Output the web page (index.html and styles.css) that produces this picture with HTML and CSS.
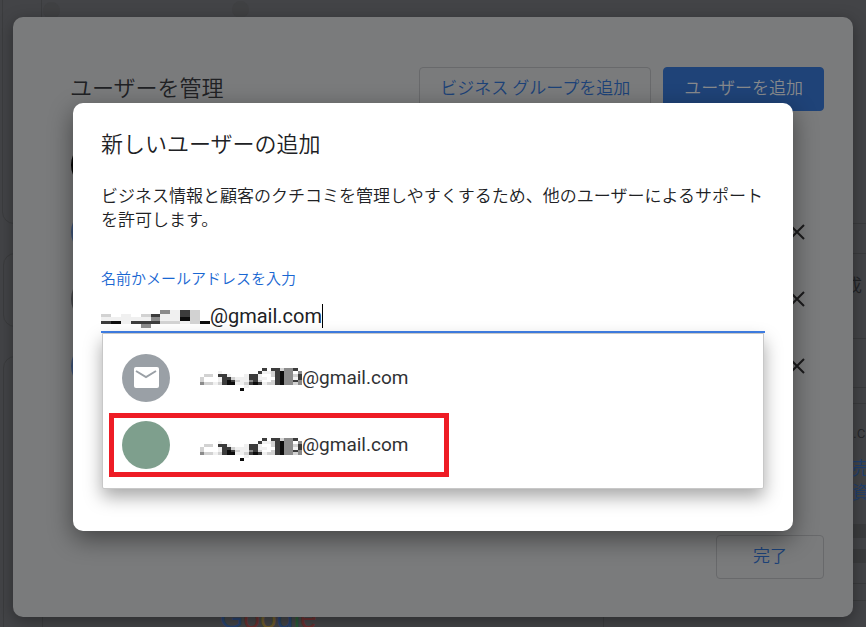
FILE: index.html
```html
<!DOCTYPE html>
<html lang="ja">
<head>
<meta charset="utf-8">
<title>ユーザーを管理</title>
<link rel="stylesheet" href="styles.css">
</head>
<body>
<div class="page" aria-hidden="true">
  <span class="card card-a"></span>
  <span class="card card-b"></span>
  <span class="card card-c"></span>
  <span class="card card-d"></span>
  <span class="rule rule-a"></span>
  <span class="rule rule-b"></span>
  <span class="rule rule-c"></span>
  <span class="rule rule-d"></span>
  <span class="rule rule-e"></span>
  <span class="rule rule-f"></span>
  <span class="bar bar-a"></span>
  <span class="bar bar-b"></span>
  <span class="blob blob-a"></span>
  <span class="blob blob-b"></span>
  <span class="side side-a">成</span>
  <span class="side side-b">s.c</span>
  <span class="side side-c">売<br>資</span>
  <span class="brand"><i class="b">G</i><i class="r">o</i><i class="y">o</i><i class="b">g</i><i class="g">l</i><i class="r">e</i></span>
</div>

<main class="manage">
  <header class="manage-head">
    <h1>ユーザーを管理</h1>
    <button class="btn">ビジネス グループを追加</button>
    <button class="btn btn-primary">ユーザーを追加</button>
  </header>
  <ul class="users">
    <li><span class="face face-black"></span></li>
    <li><span class="face face-blue"></span><button class="remove" aria-label="削除"><svg viewBox="0 0 16 16"><path d="M1 1 15 15M15 1 1 15"/></svg></button></li>
    <li><span class="face face-gray"></span><button class="remove" aria-label="削除"><svg viewBox="0 0 16 16"><path d="M1 1 15 15M15 1 1 15"/></svg></button></li>
    <li><span class="face face-blue"></span><button class="remove" aria-label="削除"><svg viewBox="0 0 16 16"><path d="M1 1 15 15M15 1 1 15"/></svg></button></li>
  </ul>
  <footer class="manage-foot"><button class="btn btn-done">完了</button></footer>
</main>

<div class="overlay">
  <section class="dialog" role="dialog" aria-labelledby="dialog-title">
    <h2 id="dialog-title">新しいユーザーの追加</h2>
    <p>ビジネス情報と顧客のクチコミを管理しやすくするため、他のユーザーによるサポートを許可します。</p>
    <label for="who">名前かメールアドレスを入力</label>
    <div class="field">
      <svg class="mosaic mosaic-field" data-rows="......GPDL.|L.P.LDPPDL.|PPPPPGPPKL.|DKPDDDLLPLK|....G......"></svg>
      <input id="who" type="text" value="@gmail.com">
      <span class="caret"></span>
    </div>
    <ul class="menu">
      <li>
        <span class="avatar avatar-mail"><svg viewBox="0 0 26 22"><rect x="1" y="0" width="25" height="21" rx="2"/><path d="M3 4 13 10 23 4"/></svg></span>
        <svg class="mosaic mosaic-name" data-rows="..............D.DDLGGD.|....P........DPPLDKGG.G|.LL.DDP...PDDP..LDKGGLD|L...PDDLPPPDDPP..DKGGPD|L...PDKDLPPGDL..LDKGGDG|GLLPLDKKPPLDKDPLLDKGGLG|..........P............|.........K............."></svg>
        <span class="mail">@gmail.com</span>
      </li>
      <li class="picked">
        <span class="avatar avatar-green"></span>
        <svg class="mosaic mosaic-name mosaic-low" data-rows="..............D.DDLGGD.|....P........DPPLDKGG.G|.LL.DDP...PDDP..LDKGGLD|L...PDDLPPPDDPP..DKGGPD|L...PDKDLPPGDL..LDKGGDG|GLLPLDKKPPLDKDPLLDKGGLG|..........P............|.........K............."></svg>
        <span class="mail">@gmail.com</span>
      </li>
    </ul>
  </section>
</div>
<script src="mosaic.js"></script>
</body>
</html>
```
FILE: mosaic.js
```js
// Fills each mosaic with one cell per letter of its data-rows pattern.
const shades = { K: '#0c0c0c', D: '#3c3c3c', G: '#8b8b8b', L: '#d2d2d2', P: '#f0f0f0' };
document.querySelectorAll('.mosaic').forEach(svg => {
  const rows = svg.dataset.rows.split('|');
  svg.setAttribute('viewBox', `0 0 ${rows[0].length} ${rows.length}`);
  svg.setAttribute('preserveAspectRatio', 'none');
  rows.forEach((row, y) => [...row].forEach((c, x) => {
    if (!shades[c]) return;
    const cell = document.createElementNS('http://www.w3.org/2000/svg', 'rect');
    cell.setAttribute('x', x);
    cell.setAttribute('y', y);
    cell.setAttribute('width', 1);
    cell.setAttribute('height', 1);
    cell.setAttribute('fill', shades[c]);
    svg.append(cell);
  }));
});
```
FILE: styles.css
```css
*, *::after { box-sizing: border-box; }

body {
  position: relative;
  margin: 0;
  min-height: 100vh;
  padding: 17px 13px 10px;
  display: flex;
  background: #434447;
  font-family: Roboto, "Noto Sans CJK JP", sans-serif;
  font-weight: 350;
  color: #202124;
}

h1, h2, p, ul { margin: 0; padding: 0; }
h1, h2 { font-size: 22px; line-height: 32px; font-weight: 350; }
li { list-style: none; }
button { font: inherit; cursor: pointer; }

/* Page behind both dialogs */
.page { position: absolute; inset: 0; overflow: hidden; }
.page > * { position: absolute; }
.card { width: 40px; border: 1px solid #3b3c3e; border-radius: 12px; }
.card-a { left: 2px; top: -12px; height: 236px; }
.card-b { left: 3px; top: 253px; height: 74px; }
.card-c { left: 3px; top: 356px; height: 300px; }
.card-d { left: 603px; top: 600px; height: 60px; width: 280px; }
.rule { right: 0; width: 20px; height: 1px; background: #3a3b3d; }
.rule-a { top: 223px; }
.rule-b { top: 253px; }
.rule-c { top: 338px; }
.rule-d { top: 387px; }
.rule-e { top: 403px; }
.rule-f { top: 583px; }
.bar { right: 0; width: 20px; height: 14px; background: #3b3c3e; }
.bar-a { top: 524px; }
.bar-b { top: 549px; }
.blob { width: 17px; height: 17px; border-radius: 50%; background: #404143; }
.blob-a { left: 43px; top: 2px; }
.blob-b { left: 232px; top: 1px; }
.side { font-size: 18px; line-height: 24px; color: #222326; }
.side-a { left: 844px; top: 274px; }
.side-b { left: 845px; top: 421px; font-size: 16px; }
.side-c { left: 852px; top: 457px; color: #20406f; }
.brand { left: 220px; top: 600px; font: 30px/36px "Liberation Sans", sans-serif; }
.brand i { font-style: normal; }
.brand .b { color: #26426f; }
.brand .r { color: #692f2f; }
.brand .y { color: #6d5a2b; }
.brand .g { color: #285a37; }

/* User management dialog, dimmed */
.manage {
  position: relative;
  flex: 1;
  display: flex;
  flex-direction: column;
  padding: 50px 29px 38px 57px;
  border-radius: 10px;
  background: #7a7b7c;
  box-shadow: 0 4px 16px rgba(0, 0, 0, .35);
}
.manage-head { display: flex; align-items: center; gap: 12px; }
.manage-head h1 { flex: 1; }
.btn {
  height: 44px;
  padding: 0 20px 5px;
  border: 1px solid #68696b;
  border-radius: 4px;
  background: none;
  color: #1c4278;
  font-size: 17px;
}
.btn-primary { border-color: #1f4378; background: #1f4378; color: #87898c; }
.btn-done { width: 108px; }
.users { flex: 1; padding: 20px 0 0 1px; }
.users li { display: flex; align-items: center; justify-content: space-between; height: 67px; }
.face { width: 48px; height: 48px; border-radius: 50%; }
.face-black { background: #050505; }
.face-blue { background: #3e557c; }
.face-gray { background: #48494c; }
.remove { width: 16px; height: 16px; margin-right: 19px; padding: 0; border: 0; background: none; }
.remove svg { display: block; fill: none; stroke: #1b1b1c; stroke-width: 2; }
.manage-foot { display: flex; justify-content: flex-end; }

/* Add user dialog */
.overlay { position: absolute; inset: 0; padding: 103px 73px; }
.dialog {
  padding: 26px 28px 42px;
  border-radius: 10px;
  background: #fff;
  box-shadow: 0 8px 24px rgba(0, 0, 0, .45);
}
.dialog p { margin-top: 23px; font-size: 17px; line-height: 24px; }
.dialog label { display: block; margin-top: 35px; font-size: 15px; line-height: 24px; color: #1967d2; }
.field {
  display: flex;
  align-items: center;
  height: 42px;
  padding-top: 10px;
  border-bottom: 2px solid #4080e8;
}
.field input {
  field-sizing: content;
  padding: 0;
  border: 0;
  outline: 0;
  background: none;
  color: #202124;
  font: 400 20px/24px Roboto, sans-serif;
}
.caret { width: 1px; height: 24px; background: #000; }
.mosaic { display: block; flex: none; shape-rendering: crispEdges; }
.mosaic-field { width: 109px; height: 18px; margin-top: 6px; }

.menu {
  margin: 0 1px;
  padding: 10px 19px;
  border: 1px solid #c8c8c8;
  border-radius: 0 0 2px 2px;
  background: #fff;
  box-shadow: 0 8px 18px rgba(0, 0, 0, .35);
}
.menu li { position: relative; display: flex; align-items: center; height: 67px; }
.avatar { display: grid; place-items: center; width: 48px; height: 48px; border-radius: 50%; }
.avatar-mail { background: #9aa0a6; }
.avatar-mail svg { width: 26px; height: 22px; fill: #fff; }
.avatar-mail path { fill: none; stroke: #9aa0a6; stroke-width: 2; }
.avatar-green { background: #7e9f8d; }
.mosaic-name { width: 102px; height: 23px; margin-left: 30px; margin-top: 4px; }
.mosaic-low { margin-top: 10px; }
.mail { font: 400 19px/24px Roboto, sans-serif; color: #303134; }
.picked::after {
  content: "";
  position: absolute;
  left: -13px;
  top: 2px;
  width: 340px;
  height: 64px;
  border: 5px solid #ee1c25;
}
```
